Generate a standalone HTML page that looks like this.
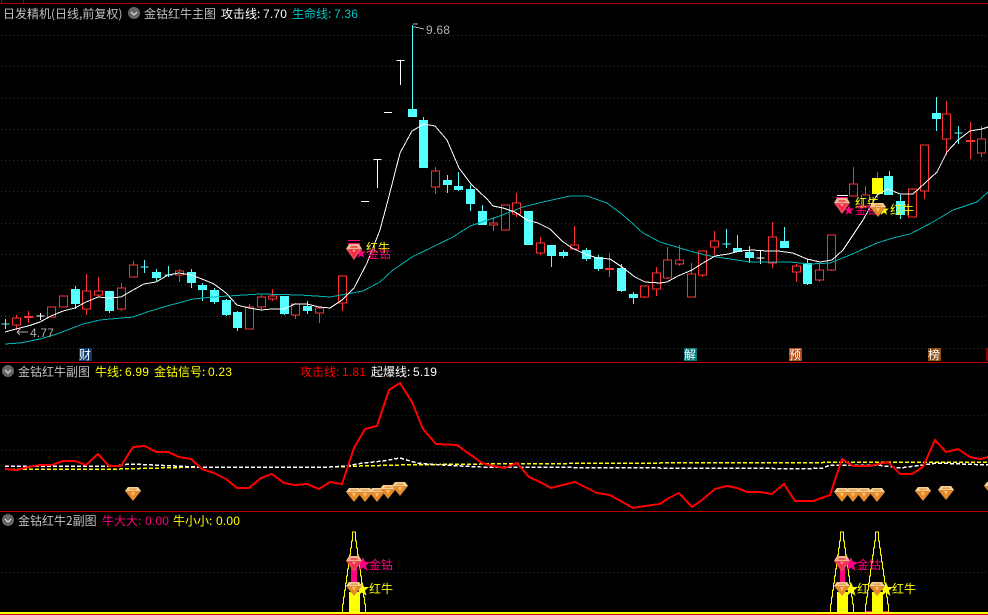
<!DOCTYPE html>
<html><head><meta charset="utf-8"><style>
html,body{margin:0;padding:0;background:#000;width:988px;height:615px;overflow:hidden}
svg{display:block;position:absolute;left:0;top:0}
text{font-family:"WenQuanYi Zen Hei","Noto Sans CJK SC","Liberation Sans",sans-serif;font-size:12px}
.n{font-family:"Liberation Sans",sans-serif;font-size:12px;letter-spacing:.2px}
.lb{font-size:12px;fill:#fff}
</style></head><body>
<svg width="988" height="615" viewBox="0 0 988 615" xmlns="http://www.w3.org/2000/svg">
<defs>
<symbol id="og" viewBox="0 0 16 14" width="16" height="14">
<polygon points="3,0 13,0 16,4 8,14 0,4" fill="#dd8a35"/>
<polygon points="3,0 13,0 16,4 0,4" fill="#f3cf98"/>
<polygon points="5,1.5 11,1.5 12,3 4,3" fill="#e89a48"/>
<polygon points="4,5 12,5 8,12" fill="#f08a20"/>
<polygon points="6,5 10,5 8,9" fill="#ffc070"/>
</symbol>
<symbol id="pg" viewBox="0 0 16 16" width="16" height="16">
<polygon points="3,0 13,0 16,5 8,16 0,5" fill="#e8485a"/>
<polygon points="3,0 13,0 16,5 0,5" fill="#eeb48e"/>
<polygon points="5,2 11,2 12,4 4,4" fill="#e8585a"/>
<polygon points="4,6 12,6 8,13" fill="#ff2040"/>
<polygon points="6,6 10,6 8,9" fill="#ff9090"/>
</symbol>
<g id="tri">
<path d="M342.5 612V604H343.5V597H344.5V590H345.5V583H346.5V576H347.5V569H348.5V562H349.5V555H350.5V548H351.5V541H352.5V532H355.5V541H356.5V548H357.5V555H358.5V562H359.5V569H360.5V576H361.5V583H362.5V590H363.5V597H364.5V604H365.5V612" fill="none" stroke="#ffff00" stroke-width="1"/>
<rect x="349" y="592" width="11" height="20" fill="#ffff00"/>
</g>
<polygon id="st" points="0,-7 2,-2 7,-2 3,1.5 4.5,7 0,3.5 -4.5,7 -3,1.5 -7,-2 -2,-2"/>
</defs>

<g shape-rendering="crispEdges">
<!-- frame -->
<path d="M0 3.5H988M1.5 0V3M23.5 0V3" stroke="#b00000" fill="none"/>
<path d="M0 362.5H988M0 511.5H988M0 614.5H988" stroke="#c00000" fill="none"/>
<!-- grid -->
<path d="M1 35.5H988M1 66.5H988M1 98.5H988M1 129.5H988M1 160.5H988M1 191.5H988M1 223.5H988M1 254.5H988M1 285.5H988M1 316.5H988M1 348.5H988M1 450.5H988M1 572.5H988" stroke="#b00000" stroke-dasharray="1 3" fill="none"/>
<path d="M1 415.5H988" stroke="#8a0000" stroke-dasharray="1 3" fill="none"/>

<!-- red hollow candles -->
<path fill="none" stroke="#ff3232" d="
M16.5 315V318M16.5 325V330M12.5 318H20.5V325H12.5Z
M47.5 307H55.5V317H47.5Z
M59.5 296H67.5V307H59.5Z
M86.5 274V291M86.5 309V315M82.5 291H90.5V309H82.5Z
M98.5 277V291M98.5 295V297M94.5 291H102.5V295H94.5Z
M121.5 283V288M121.5 309V311M117.5 288H125.5V309H117.5Z
M133.5 261V265M129.5 265H137.5V277H129.5Z
M179.5 269V271M179.5 275V282M175.5 271H183.5V275H175.5Z
M245.5 307H253.5V329H245.5ZM249.5 304V307
M261.5 295V297M261.5 307V310M257.5 297H265.5V307H257.5Z
M272.5 289V296M272.5 299V301M268.5 296H276.5V299H268.5Z
M295.5 303V304M295.5 315V319M291.5 304H299.5V315H291.5Z
M319.5 307V308M319.5 313V323M315.5 308H323.5V313H315.5Z
M342.5 303V311M338.5 276H346.5V303H338.5Z
M435.5 167V171M435.5 187V194M431.5 171H439.5V187H431.5Z
M493.5 217V223M493.5 225V231M489.5 223H497.5V225H489.5Z
M501.5 205H509.5V230H501.5Z
M516.5 193V203M516.5 214V217M512.5 203H520.5V214H512.5Z
M540.5 237V243M540.5 253V255M536.5 243H544.5V253H536.5Z
M574.5 226V245M570.5 245H578.5V249H570.5Z
M640.5 286H648.5V297H640.5ZM644.5 297V298
M656.5 267V273M656.5 289V296M652.5 273H660.5V289H652.5Z
M667.5 247V260M667.5 278V279M663.5 260H671.5V278H663.5Z
M679.5 245V260M679.5 264V266M675.5 260H683.5V264H675.5Z
M691.5 263V274M687.5 274H695.5V297H687.5Z
M702.5 275V277M698.5 251H706.5V275H698.5Z
M714.5 231V241M714.5 247V255M710.5 241H718.5V247H710.5Z
M772.5 222V237M772.5 263V268M768.5 237H776.5V263H768.5Z
M796.5 264V266M796.5 272V282M792.5 266H800.5V272H792.5Z
M819.5 264V270M819.5 280V282M815.5 270H823.5V280H815.5Z
M831.5 270V271M827.5 235H835.5V270H827.5Z
M853.5 167V184M849.5 184H857.5V196H849.5Z
M865.5 186V195M861.5 195H869.5V206H861.5Z
M912.5 188V189M908.5 189H916.5V217H908.5Z
M924.5 191V199M920.5 145H928.5V191H920.5Z
M946.5 101V114M946.5 139V155M942.5 114H950.5V139H942.5Z
M981.5 126V139M981.5 153V157M977.5 139H985.5V153H977.5Z
M28.5 311V323M609.5 253V277M970.5 122V159M877.5 172V198"/>
<path fill="#ff3232" d="M24 316h9v2h-9zM605 268h9v2h-9zM966 140h9v2h-9z"/>

<!-- cyan wicks -->
<path fill="none" stroke="#54ffff" d="
M75.5 286V309M109.5 291V313M156.5 269V281M191.5 269V288M202.5 283V301M214.5 288V304M226.5 299V316M237.5 311V331M284.5 296V315M307.5 301V314M412.5 25V117M423.5 117V168M447.5 175V193M458.5 172V191M470.5 185V211M482.5 205V225M551.5 245V267M563.5 250V258M586.5 248V261M598.5 255V271M621.5 264V292M633.5 292V304M737.5 235V252M749.5 246V263M784.5 227V248M807.5 259V285M889.5 171V195M900.5 195V219M936.5 97V131
M5.5 319V329M1.5 324H9.5M144.5 260V273M140.5 267H148.5M168.5 266V277M164.5 275H172.5M726.5 229V248M722.5 244H730.5M958.5 126V144M954.5 133H962.5"/>
<!-- cyan bodies -->
<path fill="#54ffff" d="
M71 289h9v15h-9zM105 291h9v20h-9zM152 272h9v6h-9zM187 272h9v11h-9zM198 285h9v5h-9zM210 290h9v12h-9zM222 300h9v15h-9zM233 312h9v16h-9zM280 296h9v18h-9zM303 306h9v5h-9z
M408 109h9v8h-9zM419 120h9v48h-9zM443 180h9v5h-9zM454 186h9v4h-9zM466 189h9v15h-9zM478 211h9v14h-9zM524 211h9v34h-9zM547 245h9v11h-9zM559 252h9v4h-9zM582 250h9v9h-9zM594 257h9v12h-9zM617 268h9v23h-9zM629 294h9v4h-9z
M733 248h9v4h-9zM745 252h9v6h-9zM780 241h9v7h-9zM803 263h9v21h-9zM884 176h9v19h-9zM896 201h9v14h-9zM932 113h9v6h-9z"/>
<rect x="872" y="178" width="11" height="16" fill="#ffff00"/>

<!-- white candles -->
<path fill="none" stroke="#ffffff" d="M40.5 313V320M36.5 316H44.5M760.5 250V264M756.5 258H764.5M377.5 159V188M373.5 159.5H381.5M400.5 60V85M396.5 60.5H404.5M361 201.5H369M384 112.5H392M837 195.5H848"/>

<!-- lines -->
<polyline fill="none" stroke="#00b4b4" points="5,344 20,343 40,339 57,334 83,324 100,320 133,317 147,312 167,306 193,299 213,297 260,294 300,295 330,297 363,291 380,282 393,270 412,257 453,237 470,226 497,217 523,207 543,202 570,196 587,196 607,203 623,215 643,233 660,242 693,252 710,256 750,262 790,262 810,264 830,263 850,255 877,243 893,238 910,234 933,222 953,210 977,202 988,192"/>
<polyline fill="none" stroke="#ffffff" points="5,332 16,329 28,326 40,322 51,316 63,311 75,308 86,302 98,297 109,298 121,297 133,290 144,284 156,282 168,275 179,273 191,275 202,279 214,284 226,293 237,305 249,308 261,310 272,309 284,309 295,304 307,304 319,307 330,308 342,300 354,288 367,263 380,230 388,200 400,153 412,131 424,124 435,126 447,140 459,168 471,184 487,199 493,206 503,208 515,212 527,220 538,223 550,229 562,241 572,248 585,254 597,258 610,259 622,267 635,277 645,282 660,283 667,282 678,276 692,270 703,263 715,256 728,254 740,251 752,250 767,251 778,251 793,253 807,259 820,262 832,260 843,250 853,235 863,220 877,195 888,189 900,194 913,194 937,172 947,152 958,140 970,131 982,129 988,127"/>

<!-- price flags -->
<path fill="none" stroke="#b0b0b0" d="M413 24H418M413 27H416M415 27L424 29M17 332H28M17 332L20 329M17 332L20 335"/>

<!-- sub1 dashed -->
<polyline fill="none" stroke="#ffff00" stroke-width="1.5" stroke-dasharray="4 2" points="5,469 120,469 200,467 330,467 360,466 400,465 480,464 660,463 988,462"/>
<polyline fill="none" stroke="#ffffff" stroke-width="1.5" stroke-dasharray="4 2" points="5,466 113,466 130,464 197,467 330,467 346,466 363,463 383,461 400,458 417,463 443,465 480,467 660,468 743,468 803,469 823,468 830,465 877,465 900,468 923,465 937,463 988,465"/>
<polyline fill="none" stroke="#ff0000" stroke-width="2" points="5,469 17,470 28,467 40,465 52,465 63,461 75,461 86,465 98,454 109,466 121,466 133,447 145,446 156,452 168,452 179,457 191,459 202,469 214,473 226,479 237,488 249,488 261,478 272,474 284,483 295,485 307,484 319,489 330,482 342,484 354,448 365,429 377,426 389,390 400,383 412,402 423,429 436,444 457,445 482,463 493,466 505,468 517,463 529,477 540,482 551,488 575,482 597,493 610,495 633,508 645,506 660,504 667,499 679,493 692,507 702,500 715,489 727,486 737,488 747,492 760,492 772,494 784,484 795,501 813,501 830,495 842,459 853,466 870,466 888,462 900,474 912,474 923,467 935,440 946,452 958,449 970,457 980,459 988,457"/>

<!-- sub2 -->
<use href="#tri"/>
<use href="#tri" x="488"/>
<use href="#tri" x="523"/>
<rect x="351" y="560" width="6" height="22" fill="#ff0080"/>
<rect x="840" y="560" width="5" height="22" fill="#ff0080"/>
<path d="M866 611h6v1h-6zM883 611h5v1h-5z" fill="#ff0080"/>
<rect x="0" y="612" width="988" height="2" fill="#ffff00"/>
</g>

<!-- sub1 gems -->
<use href="#og" x="125" y="487"/><use href="#og" x="346" y="488"/><use href="#og" x="357" y="488"/><use href="#og" x="369" y="488"/><use href="#og" x="380" y="485"/><use href="#og" x="392" y="482"/><use href="#og" x="834" y="488"/><use href="#og" x="845" y="488"/><use href="#og" x="856" y="488"/><use href="#og" x="869" y="488"/><use href="#og" x="915" y="487"/><use href="#og" x="938" y="486"/><use href="#og" x="984" y="482"/>

<!-- main markers -->
<path d="M348 240.5h12M348 243.5h12" stroke="#ff0080" fill="none"/>
<use href="#st" transform="translate(361,253) scale(.7)" fill="#ff0080"/>
<use href="#pg" x="346" y="244"/>
<text x="366" y="252" fill="#ffff00">红牛</text>
<text x="367" y="258" fill="#ff0080">金钴</text>

<path d="M836 197.5h12" stroke="#ff0080" fill="none"/>
<use href="#st" transform="translate(849,210) scale(.7)" fill="#ff0080"/>
<use href="#pg" x="834" y="198"/>
<text x="855" y="207" fill="#ffff00">红牛</text>
<text x="855" y="214" fill="#ff0080">金钴</text>
<use href="#st" transform="translate(884,210) scale(.7)" fill="#ffff00"/>
<use href="#og" x="870" y="203"/>
<text x="890" y="214" fill="#ffff00">红牛</text>

<!-- sub2 markers -->
<use href="#st" transform="translate(363,564)" fill="#ff0080"/>
<use href="#pg" x="346" y="556"/>
<text x="369" y="569" fill="#ff0080">金钴</text>
<use href="#st" transform="translate(362,589)" fill="#ffff00"/>
<use href="#og" x="346" y="582"/>
<text x="369" y="593" fill="#ffff00">红牛</text>

<use href="#st" transform="translate(851,564)" fill="#ff0080"/>
<use href="#pg" x="834" y="556"/>
<text x="857" y="569" fill="#ff0080">金钴</text>
<use href="#st" transform="translate(851,589)" fill="#ffff00"/>
<use href="#og" x="834" y="582"/>
<text x="857" y="593" fill="#ffff00">红</text>
<use href="#st" transform="translate(886,589)" fill="#ffff00"/>
<use href="#og" x="869" y="582"/>
<text x="892" y="593" fill="#ffff00">红牛</text>

<!-- price labels -->
<text class="n" x="426" y="34" fill="#b0b0b0">9.68</text>
<text class="n" x="30" y="337" fill="#b0b0b0">4.77</text>

<!-- event tags -->
<rect x="79" y="348" width="13" height="13" fill="#0a3a70"/><text x="79" y="359" class="lb">财</text>
<rect x="684" y="348" width="13" height="13" fill="#007a80"/><text x="684" y="359" class="lb">解</text>
<rect x="789" y="348" width="13" height="13" fill="#b04810"/><text x="789" y="359" class="lb">预</text>
<rect x="928" y="348" width="13" height="13" fill="#8a4a10"/><text x="928" y="359" class="lb">榜</text>
<rect x="986" y="348" width="2" height="13" fill="#800000"/>

<!-- title rows -->
<text x="3" y="18" fill="#c0c0c0">日发精机(日线,前复权)</text>
<circle cx="134" cy="13" r="6" fill="#666"/><path d="M131 12l3 3 3-3" fill="none" stroke="#ddd" stroke-width="1.2"/>
<text x="144" y="18" fill="#c0c0c0">金钴红牛主图</text>
<text x="221" y="18" fill="#ffffff">攻击线:</text>
<text class="n" x="263" y="18" fill="#ffffff">7.70</text>
<text x="292" y="18" fill="#00c8c8">生命线:</text>
<text class="n" x="334" y="18" fill="#00c8c8">7.36</text>

<circle cx="8" cy="371" r="6" fill="#666"/><path d="M5 370l3 3 3-3" fill="none" stroke="#ddd" stroke-width="1.2"/>
<text x="18" y="376" fill="#c0c0c0">金钴红牛副图</text>
<text x="95" y="376" fill="#ffff00">牛线:</text>
<text class="n" x="125" y="376" fill="#ffff00">6.99</text>
<text x="154" y="376" fill="#ffff00">金钴信号:</text>
<text class="n" x="208" y="376" fill="#ffff00">0.23</text>
<text x="300" y="376" fill="#ff0000">攻击线:</text>
<text class="n" x="342" y="376" fill="#ff0000">1.81</text>
<text x="371" y="376" fill="#ffffff">起爆线:</text>
<text class="n" x="413" y="376" fill="#ffffff">5.19</text>

<circle cx="8" cy="520" r="6" fill="#666"/><path d="M5 519l3 3 3-3" fill="none" stroke="#ddd" stroke-width="1.2"/>
<text x="18" y="525" fill="#c0c0c0">金钴红牛2副图</text>
<text x="102" y="525" fill="#ff0080">牛大大:</text>
<text class="n" x="145" y="525" fill="#ff0080">0.00</text>
<text x="173" y="525" fill="#ffff00">牛小小:</text>
<text class="n" x="216" y="525" fill="#ffff00">0.00</text>
</svg>
</body></html>
